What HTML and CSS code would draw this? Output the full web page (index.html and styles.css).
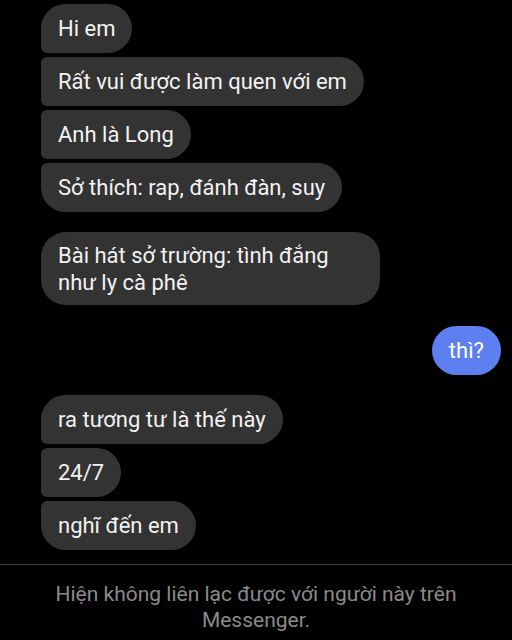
FILE: index.html
```html
<!DOCTYPE html>
<html lang="vi">
<head>
<meta charset="utf-8">
<link rel="stylesheet" href="styles.css">
</head>
<body>
<div class="chat">
  <div class="group">
    <div class="bubble in first">Hi em</div>
    <div class="bubble in mid">Rất vui được làm quen với em</div>
    <div class="bubble in mid">Anh là Long</div>
    <div class="bubble in last">Sở thích: rap, đánh đàn, suy</div>
  </div>
  <div class="group">
    <div class="bubble in multi">Bài hát sở trường: tình đắng<br>như ly cà phê</div>
  </div>
  <div class="group out-group">
    <div class="bubble out">thì?</div>
  </div>
  <div class="group">
    <div class="bubble in first">ra tương tư là thế này</div>
    <div class="bubble in mid">24/7</div>
    <div class="bubble in last">nghĩ đến em</div>
  </div>
</div>
<div class="footer">Hiện không liên lạc được với người này trên<br>Messenger.</div>
</body>
</html>
```
FILE: styles.css
```css
html, body {
  margin: 0;
  padding: 0;
  background: #000;
  width: 512px;
  height: 640px;
  overflow: hidden;
  font-family: Roboto, "Noto Sans", sans-serif;
}
.chat {
  padding: 4px 0 0 41px;
  display: flex;
  flex-direction: column;
  gap: 20px;
  height: 565px;
  box-sizing: border-box;
  border-bottom: 1.5px solid #3a3a3a;
}
.group {
  display: flex;
  flex-direction: column;
  align-items: flex-start;
  gap: 4px;
}
.out-group {
  align-items: flex-end;
  padding-right: 11px;
  margin-top: 1px;
}
.bubble {
  font-size: 22px;
  line-height: 27px;
  color: #f2f2f2;
  padding: 11px 17px;
  border-radius: 25px;
  white-space: nowrap;
}
.in { background: #333333; }
.multi {
  padding: 9.5px 17px;
  width: 339px;
  box-sizing: border-box;
}
.first { border-bottom-left-radius: 6px; }
.mid { border-top-left-radius: 6px; border-bottom-left-radius: 6px; }
.last { border-top-left-radius: 6px; }
.out {
  background: #5d7ff0;
  color: #fff;
}
.footer {
  text-align: center;
  color: #8a8a8a;
  font-size: 21px;
  line-height: 26px;
  padding-top: 16px;
}
```
